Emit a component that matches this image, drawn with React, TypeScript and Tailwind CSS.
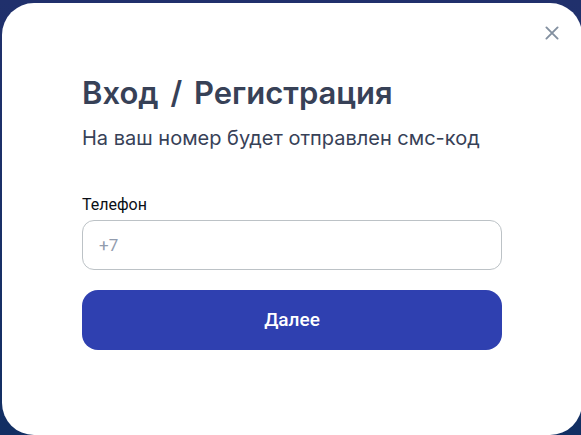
import React, { useState } from 'react';

const CloseIcon = () => (
    <svg
        viewBox="0 0 14 14"
        className="w-3.5 h-3.5"
        fill="none"
        stroke="currentColor"
        strokeWidth="1.9"
        strokeLinecap="round"
        aria-hidden="true"
    >
        <path d="M1.4 1.4L12.6 12.6M12.6 1.4L1.4 12.6" />
    </svg>
);

const App = () => {
    const [phone, setPhone] = useState('');

    return (
        <div className="min-h-screen flex overflow-hidden bg-linear-to-b from-[#20306c] to-[#122f63] pt-[3px] pl-[2px] font-['Inter','Liberation_Sans',sans-serif]">
            <main
                role="dialog"
                aria-labelledby="login-title"
                className="relative flex-1 -mr-px bg-white rounded-[32px] px-20 pt-[70px] pb-20"
            >
                <button
                    type="button"
                    aria-label="Закрыть"
                    className="absolute top-[23px] right-[23px] text-[#8390a0]"
                >
                    <CloseIcon />
                </button>

                <h1
                    id="login-title"
                    className="text-[31px] leading-10 font-semibold text-[#374157] whitespace-nowrap"
                >
                    Вход <span className="mx-1">/</span> Регистрация
                </h1>
                <p className="mt-2 text-xl leading-[34px] text-[#374157] whitespace-nowrap">
                    На ваш номер будет отправлен смс-код
                </p>

                <form
                    className="mt-[38px] flex flex-col font-['Roboto','Liberation_Sans',sans-serif]"
                    onSubmit={(e) => e.preventDefault()}
                >
                    <label
                        htmlFor="phone"
                        className="mb-[3px] text-base leading-6 text-[#0b0f16]"
                    >
                        Телефон
                    </label>
                    <input
                        id="phone"
                        type="tel"
                        placeholder="+7"
                        value={phone}
                        onChange={(e) => setPhone(e.target.value)}
                        className="h-[50px] px-4 text-[17px] rounded-xl border border-[#bcc2c6] placeholder:text-[#929cae] focus:outline-none"
                    />
                    <button
                        type="submit"
                        className="mt-5 h-[60px] rounded-2xl bg-[#2f40b0] text-[19px] font-medium text-white"
                    >
                        Далее
                    </button>
                </form>
            </main>
        </div>
    );
};

export default App;
